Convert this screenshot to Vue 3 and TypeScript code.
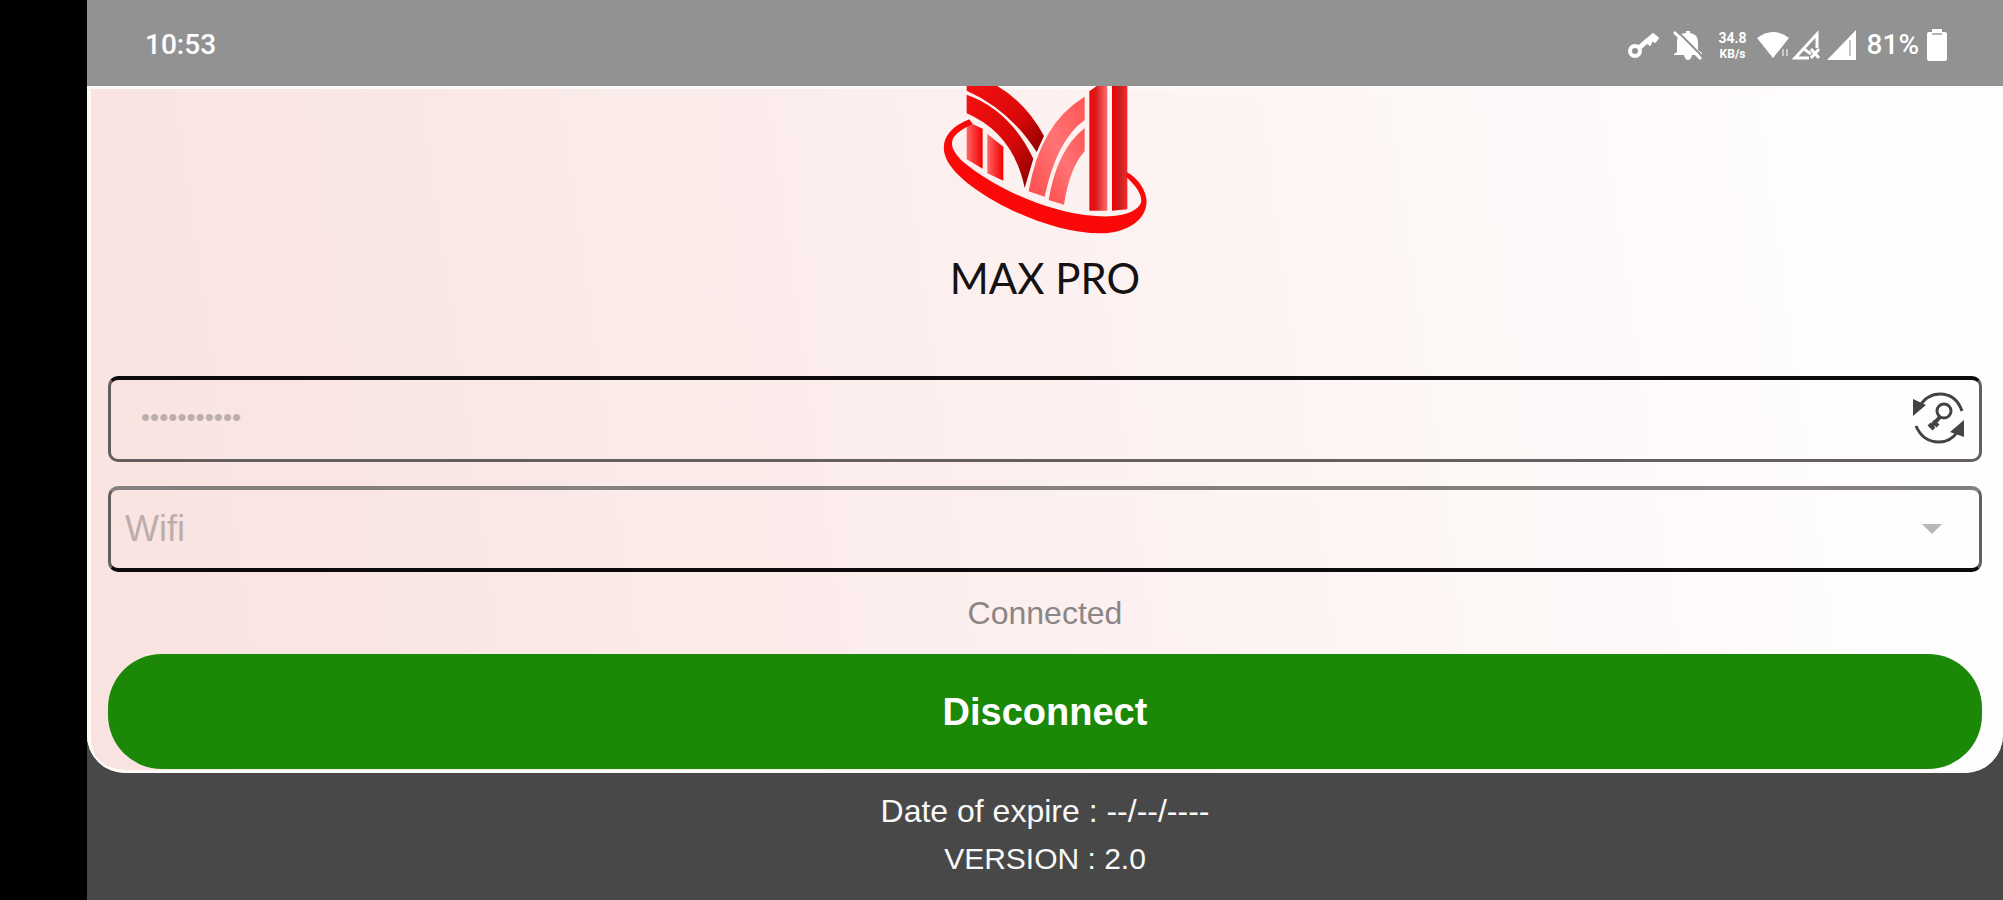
<script setup lang="ts">
import { ref } from 'vue'

const secret = ref('abcdefghijk')
const network = ref('Wifi')
const networks: string[] = ['Wifi']
</script>

<template>
  <div class="screen">
    <div class="app">
      <header class="status">
        <time class="clock">10:53</time>
        <div class="tray">
          <svg class="key" viewBox="0 0 32 28" aria-label="VPN" role="img">
            <circle cx="8" cy="20" r="5" fill="none" stroke="#fff" stroke-width="4" />
            <path d="M12 17 21 9" fill="none" stroke="#fff" stroke-width="5" />
            <path d="M18 10 26 3 31 7 28 11 25 9 23 14z" fill="#fff" stroke="#fff" stroke-width="2" stroke-linejoin="round" />
          </svg>
          <svg class="bell" viewBox="0 0 30 30" aria-label="Muted" role="img">
            <path d="M4 22V11q1-8 9-8V1h4v2q8 1 8 9v8l4 3v2H1v-1zM11 25h8q-1 5-4 5t-4-5z" fill="#fff" />
            <path d="M5 2 30 27" stroke="#929292" stroke-width="2" />
            <path d="M1 2 28 29" stroke="#fff" stroke-width="3" />
          </svg>
          <span class="speed"><span>34.8</span><span>KB/s</span></span>
          <svg class="wifi" viewBox="0 0 34 28" aria-label="Wi-Fi" role="img">
            <path d="M0 7Q16-5 32 7L16 27z" fill="#fff" />
            <path d="M26 18v7M30 18v7" stroke="#c9c9c9" stroke-width="2" />
          </svg>
          <svg class="signal" viewBox="0 0 30 30" aria-label="No service" role="img">
            <path d="M26 18V4L4 28H18M13 19 20 24M20 19l8 9M28 19l-8 9" fill="none" stroke="#fff" stroke-width="3" />
          </svg>
          <svg class="signal" viewBox="0 0 30 30" aria-label="Signal" role="img">
            <path d="M0 30 29 0V30z" fill="#fff" />
            <path d="M23 10V26" stroke="#c8c8c8" stroke-width="2" />
          </svg>
          <span class="level">81%</span>
          <svg class="battery" viewBox="0 0 20 32" aria-label="Battery" role="img">
            <path d="M5 0H15V3H18Q20 3 20 5V30Q20 32 18 32H2Q0 32 0 30V5Q0 3 2 3H5z" fill="#fff" />
            <path d="M5 5H15" stroke="#b4b4b4" stroke-width="2" />
          </svg>
        </div>
      </header>

      <main class="card">
        <svg class="logo" viewBox="60 48 630 456" aria-label="Max Pro logo" role="img">
          <defs>
            <linearGradient id="arch" x1="0" y1="0" x2="1" y2="1">
              <stop offset="0" stop-color="#f51010" />
              <stop offset=".6" stop-color="#d80808" />
              <stop offset="1" stop-color="#850000" />
            </linearGradient>
            <linearGradient id="rise" x1="0" y1="1" x2="1" y2="0">
              <stop offset="0" stop-color="#ff4d4d" />
              <stop offset=".5" stop-color="#ff7474" />
              <stop offset="1" stop-color="#ff5555" />
            </linearGradient>
            <linearGradient id="barA" x1="0" y1="0" x2="1" y2="0">
              <stop offset="0" stop-color="#f40606" />
              <stop offset=".35" stop-color="#d71a1a" />
              <stop offset="1" stop-color="#ff6d6d" />
            </linearGradient>
            <linearGradient id="barB" x1="0" y1="0" x2="1" y2="0">
              <stop offset="0" stop-color="#ee0000" />
              <stop offset=".5" stop-color="#c82020" />
              <stop offset="1" stop-color="#f52a2a" />
            </linearGradient>
            <linearGradient id="stem" x1="0" y1="0" x2="1" y2="0">
              <stop offset="0" stop-color="#ff6464" />
              <stop offset="1" stop-color="#f20000" />
            </linearGradient>
          </defs>
          <path d="M140 48H232Q320 100 372 198L350 246Q270 120 140 62z" fill="url(#arch)" />
          <path d="M140 74Q270 120 340 266L314 354Q280 190 140 130z" fill="url(#arch)" />
          <path d="M140 154 188 176V296L140 268z" fill="url(#stem)" />
          <path d="M202 192 250 230V332L202 310z" fill="url(#stem)" />
          <path d="M494 80V150Q410 210 374 380L326 364Q360 160 494 80z" fill="url(#rise)" />
          <path d="M494 174V244Q450 290 432 404L386 390Q410 240 494 174z" fill="url(#rise)" />
          <path d="M508 64 530 48H562V422H508z" fill="url(#barA)" />
          <path d="M576 48H622V418L576 422z" fill="url(#barB)" />
          <path d="M148 148C84 172 52 220 84 276C140 372 380 490 540 490C630 490 690 440 678 380C672 352 650 322 620 306V322C650 350 664 372 664 394C658 426 600 444 530 438C390 432 220 352 130 276C78 226 84 196 158 162z" fill="#fb0909" />
        </svg>
        <h1 class="brand">MAX PRO</h1>

        <form class="form" @submit.prevent>
          <div class="field">
            <input v-model="secret" class="control secret" type="password" autocomplete="off" aria-label="Access key" />
            <button class="renew" type="button" aria-label="Renew key">
              <svg viewBox="0 0 52 54">
                <g fill="none" stroke="#444" stroke-width="3">
                  <path d="M6 16Q14 3 27 3Q43 3 49 20M3 35Q10 51 26 51Q38 51 45 40" />
                  <circle cx="31" cy="20" r="7" />
                  <path d="M27 26 17 37M20 30l5 5M16 33l5 5" stroke-width="4" />
                </g>
                <path d="M0 8V25L13 14zM51 29V46L37 41z" fill="#444" />
              </svg>
            </button>
          </div>
          <div class="field lower">
            <select v-model="network" class="control network" aria-label="Network">
              <option v-for="n in networks" :key="n">{{ n }}</option>
            </select>
            <svg class="caret" viewBox="0 0 20 12" aria-hidden="true"><path d="M0 1H20L10 11z" fill="#b8b6b6" /></svg>
          </div>
          <p class="state" role="status">Connected</p>
          <button class="toggle" type="button">Disconnect</button>
        </form>
      </main>

      <footer class="foot">
        <p class="expiry">Date of expire : --/--/----</p>
        <p class="version">VERSION : 2.0</p>
      </footer>
    </div>
  </div>
</template>

<style>
body {
  margin: 0;
  background: #484848;
}
</style>

<style scoped>
.screen {
  min-height: 100vh;
  padding-left: 87px;
  box-sizing: border-box;
  background: #000;
  display: flex;
  font-family: "Liberation Sans", Arial, sans-serif;
}
.app {
  flex: 1;
  min-width: 0;
  background: #484848;
  display: flex;
  flex-direction: column;
}
.status {
  height: 86px;
  box-sizing: border-box;
  padding: 4px 56px 0 58px;
  background: #929292;
  color: #fff;
  display: flex;
  align-items: center;
  justify-content: space-between;
  font: 500 28px/32px Roboto, sans-serif;
}
.tray {
  display: flex;
  align-items: center;
}
.tray svg {
  display: block;
}
.key {
  width: 32px;
  height: 28px;
  margin-right: 14px;
}
.bell {
  width: 30px;
  height: 30px;
  margin-right: 12px;
}
.speed {
  display: flex;
  flex-direction: column;
  align-items: center;
  width: 36px;
  margin-right: 6px;
  font-size: 14px;
  font-weight: 700;
  line-height: 17px;
}
.speed span + span {
  font-size: 12px;
  line-height: 14px;
}
.wifi {
  width: 34px;
  height: 28px;
}
.signal {
  width: 30px;
  height: 30px;
  margin-right: 6px;
}
.level {
  margin: 0 8px 0 4px;
}
.battery {
  width: 20px;
  height: 32px;
}
.card {
  display: flex;
  flex-direction: column;
  align-items: center;
  padding: 0 21px 4px;
  border-radius: 0 0 38px 38px;
  background: linear-gradient(82deg, #f9e3e1 0%, #f9e7e5 18%, #fceeed 42%, #fdf6f5 66%, #fffefe 94%);
  box-shadow: inset 4px 3px 0 #fffafa, inset 0 -3px 0 #fffafa;
}
.logo {
  width: 210px;
  height: 152px;
  display: block;
}
.brand {
  margin: 16px 0 0;
  font: 400 42px/48px Lato, sans-serif;
  color: #141212;
}
.form {
  align-self: stretch;
  margin-top: 74px;
  display: flex;
  flex-direction: column;
}
.field {
  height: 86px;
  box-sizing: border-box;
  padding-bottom: 4px;
  border: 3px solid #655f5f;
  border-top: 4px solid #0c0a0a;
  border-radius: 10px;
  display: flex;
  align-items: center;
}
.lower {
  margin-top: 24px;
  padding-bottom: 0;
  border-top: 4px solid #857f7f;
  border-bottom: 4px solid #0c0a0a;
}
.control {
  flex: 1;
  min-width: 0;
  height: 100%;
  border: 0;
  outline: 0;
  background: none;
  appearance: none;
  font: 400 36px/44px "Liberation Sans", Arial, sans-serif;
  color: #bcaeac;
}
.secret {
  padding: 0 30px;
  font-size: 26px;
}
.network {
  padding: 0 14px;
}
.renew {
  width: 52px;
  height: 54px;
  margin-right: 14px;
  padding: 0;
  border: 0;
  background: none;
}
.renew svg {
  display: block;
  width: 100%;
  height: 100%;
}
.caret {
  width: 20px;
  height: 12px;
  margin-right: 37px;
  pointer-events: none;
}
.state {
  margin: 22px 0;
  font-size: 32px;
  line-height: 38px;
  text-align: center;
  color: #8b8585;
}
.toggle {
  height: 115px;
  padding: 0;
  border: 0;
  border-radius: 54px;
  background: #1c8808;
  color: #fff;
  font: 700 38px/44px "Liberation Sans", Arial, sans-serif;
}
.foot {
  padding-top: 14px;
  color: #f8f8f8;
  text-align: center;
}
.foot p {
  margin: 0;
  line-height: 48px;
}
.expiry {
  font-size: 32px;
}
.version {
  font-size: 30px;
}
</style>
